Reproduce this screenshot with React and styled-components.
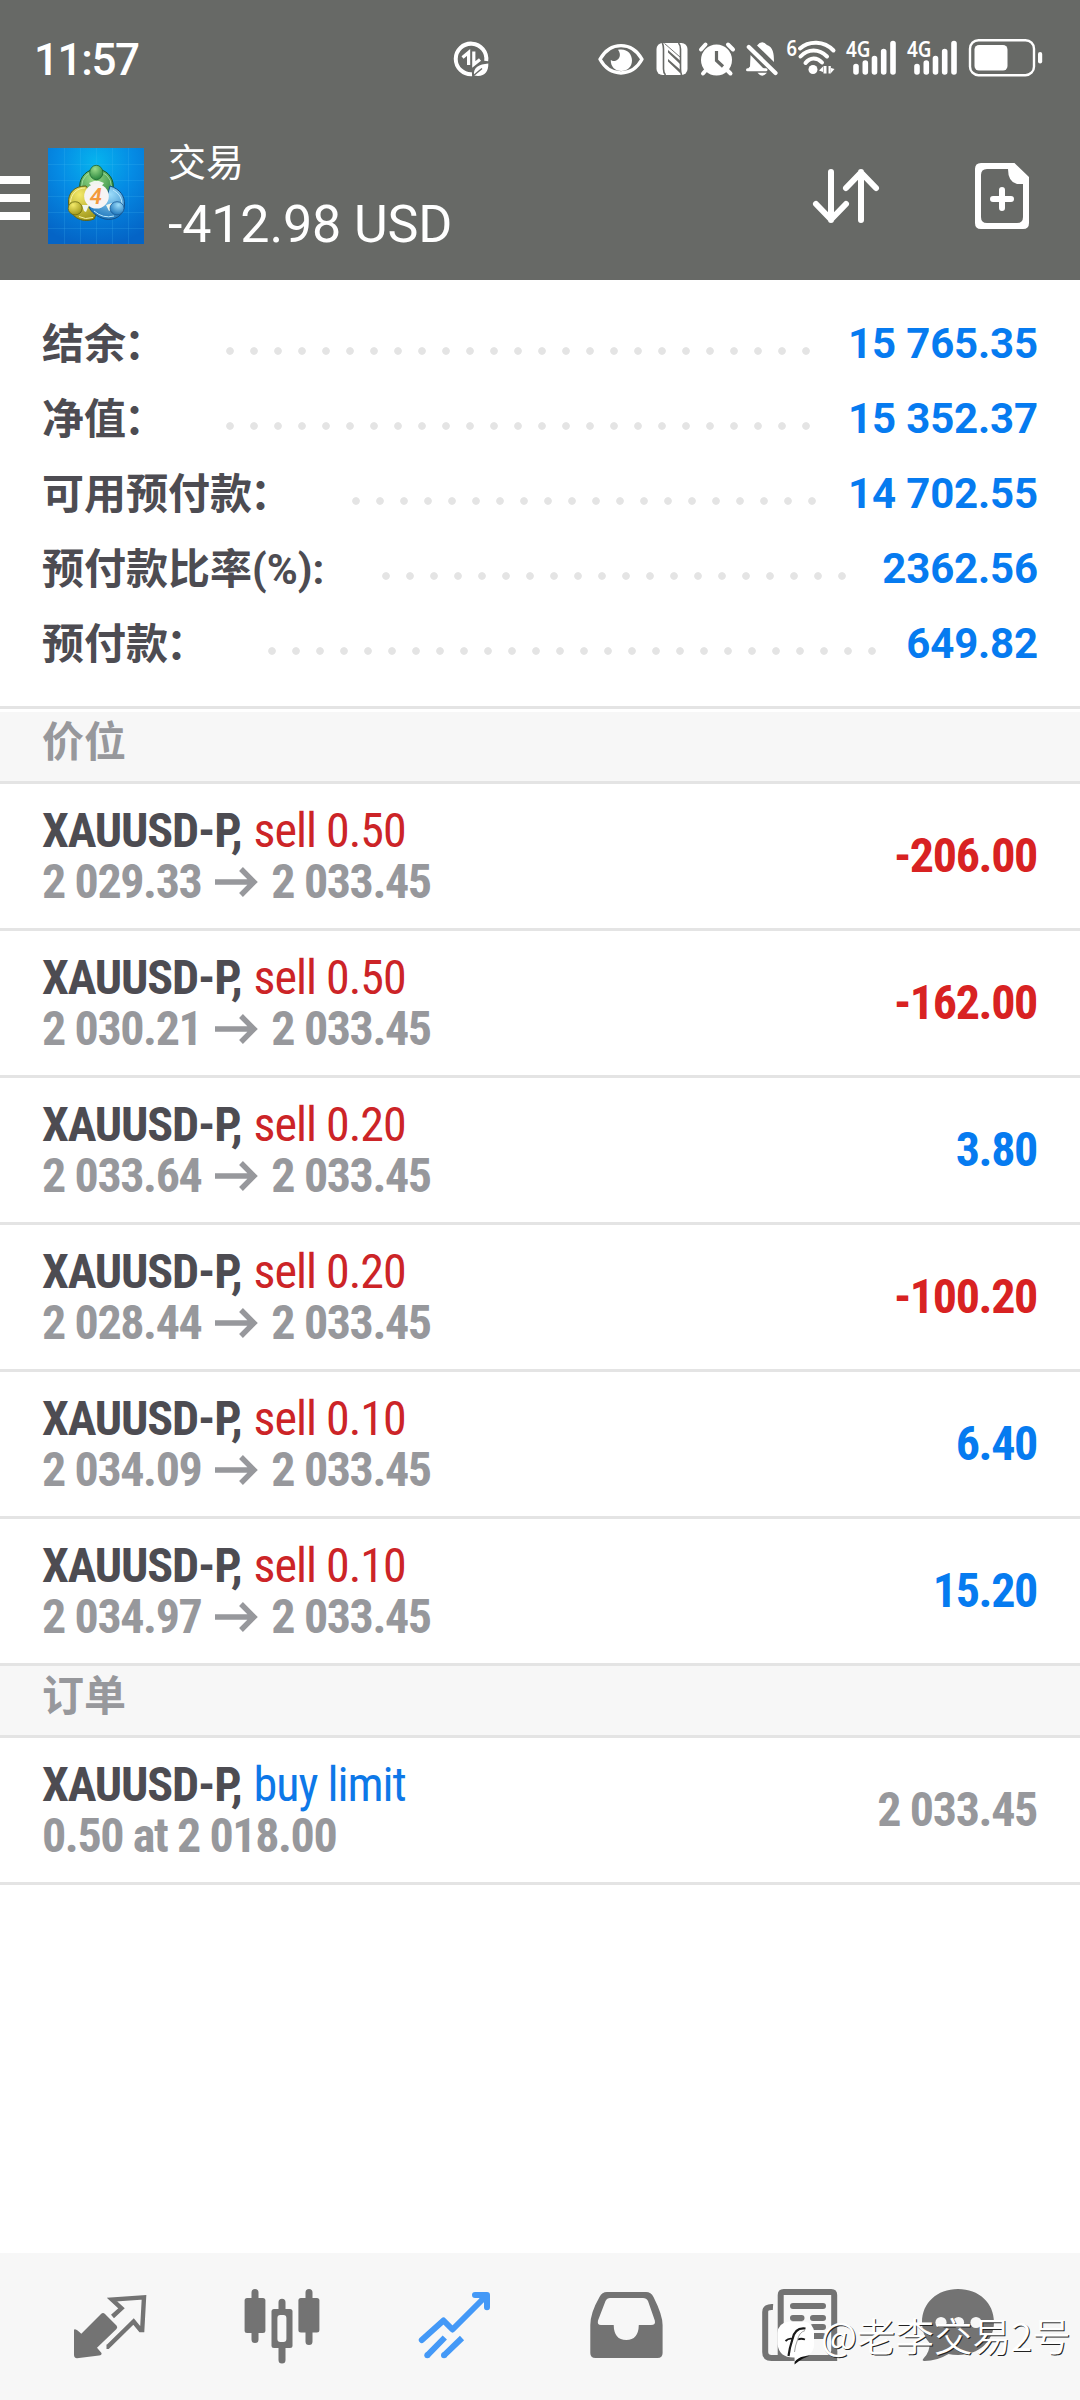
import React from "react";
import styled, { createGlobalStyle } from "styled-components";

const account = [
  { label: "结余", colon: "：", value: "15 765.35" },
  { label: "净值", colon: "：", value: "15 352.37" },
  { label: "可用预付款", colon: "：", value: "14 702.55" },
  { label: "预付款比率(%):", value: "2362.56" },
  { label: "预付款", colon: "：", value: "649.82" },
];

const positions = [
  { symbol: "XAUUSD-P", side: "sell 0.50", open: "2 029.33", current: "2 033.45", profit: "-206.00" },
  { symbol: "XAUUSD-P", side: "sell 0.50", open: "2 030.21", current: "2 033.45", profit: "-162.00" },
  { symbol: "XAUUSD-P", side: "sell 0.20", open: "2 033.64", current: "2 033.45", profit: "3.80" },
  { symbol: "XAUUSD-P", side: "sell 0.20", open: "2 028.44", current: "2 033.45", profit: "-100.20" },
  { symbol: "XAUUSD-P", side: "sell 0.10", open: "2 034.09", current: "2 033.45", profit: "6.40" },
  { symbol: "XAUUSD-P", side: "sell 0.10", open: "2 034.97", current: "2 033.45", profit: "15.20" },
];

const SaverIcon = () => (
  <svg width="36" height="40" viewBox="0 0 36 40" fill="none" stroke="#fff">
    <path d="M19 35.2A15.3 15.3 0 1 1 33.2 22" strokeWidth="4" />
    <path d="M15.6 26V13.5L9.5 18.5M20.8 12.5V25.5L27 20.5" strokeWidth="3.2" />
    <path d="M21 36.5C20 28 26 25.5 35.3 24.5C35.6 33 31 38.5 21 36.5Z" fill="#fff" stroke="none" />
    <path d="M20 37L29 29.5" stroke="#676966" strokeWidth="1.4" />
  </svg>
);

const EyeIcon = () => (
  <svg width="46" height="40" viewBox="0 0 46 40">
    <path d="M2 20.3C12 2 34 2 44 20.3C34 38.5 12 38.5 2 20.3Z" fill="none" stroke="#fff" strokeWidth="3.4" strokeLinejoin="round" />
    <path d="M20 10.8C29 9 34 15 34 21.5C34 28 29 32 23.3 32C17 32 12.5 27.5 12.8 21C13.5 21.5 15 22.3 17 22C22 21 23.5 15 20 10.8Z" fill="#fff" />
  </svg>
);

const NfcIcon = () => (
  <svg width="32" height="40" viewBox="0 0 32 40">
    <rect x="0.5" y="4" width="31" height="32" rx="6" fill="#fff" />
    <path d="M9.5 36Q7.5 34 7.5 30V10Q7.5 7 6.5 4M22.5 4Q24.5 6 24.5 10V30Q24.5 33 25.5 36" fill="none" stroke="#676966" strokeWidth="1.6" />
    <path d="M12 11V13.5L24 25V21.5ZM12 20V22.5L24 34V30.5Z" fill="#676966" />
    <path d="M8.5 4.5L24 18" stroke="#676966" strokeWidth="0.9" />
  </svg>
);

const AlarmIcon = () => (
  <svg width="38" height="40" viewBox="0 0 38 40">
    <circle cx="18.5" cy="21" r="15.5" fill="#fff" />
    <path d="M3 10.5L7.5 5.5M35 10.5L30 5.5M5 34.5L9 30M32.5 34.5L28 30" stroke="#fff" strokeWidth="4" strokeLinecap="round" />
    <path d="M18.5 12V21.5L25 27.5" fill="none" stroke="#676966" strokeWidth="3.2" />
  </svg>
);

const BellOffIcon = () => (
  <svg width="32" height="40" viewBox="0 0 32 40">
    <path d="M4.5 16L20 32H3.5Q1 30 4 27.5Z" fill="#fff" />
    <path d="M11 6.5Q16 0.5 21 6C27 8 28 14 28 23Z" fill="#fff" />
    <path d="M2.8 8L29.5 34" stroke="#fff" strokeWidth="4.2" strokeLinecap="round" />
    <path d="M1.5 30.8H20" stroke="#fff" strokeWidth="3" strokeLinecap="round" />
    <path d="M11.5 33.8H21Q16 39.5 11.5 33.8Z" fill="#fff" />
  </svg>
);

const WifiIcon = () => (
  <svg width="50" height="40" viewBox="0 0 50 40">
    <text x="0.5" y="17" fill="#fff" fontFamily="'Noto Sans', sans-serif" fontWeight="600" fontSize="22" textLength="10.5" lengthAdjust="spacingAndGlyphs">6</text>
    <g fill="none" stroke="#fff" strokeWidth="4" strokeLinecap="round">
      <path d="M14 9.5C23 1.5 38 1.5 47.5 11.5" />
      <path d="M14.5 17.5C22 9.5 33 9.5 41 17.5" />
      <path d="M19.5 24C24 18 31 18 36 23.5" />
    </g>
    <circle cx="27" cy="30.5" r="4.5" fill="#fff" />
    <path d="M37.5 27V34.5H40.5V27ZM37 27.5V33L33 31.5ZM42.5 27H44.8V34.5H42.5ZM45 29L48.5 30L45 34Z" fill="#fff" />
  </svg>
);

const SignalIcon = () => (
  <svg width="51" height="40" viewBox="0 0 51 40">
    <text x="0" y="18" fill="#fff" fontFamily="'Noto Sans', sans-serif" fontWeight="600" fontSize="22" textLength="24.5" lengthAdjust="spacingAndGlyphs">4G</text>
    <path d="M10 27.5V33M19.3 24V33M28.5 19.5V33M37.7 12.5V33M47 4.5V33" stroke="#fff" strokeWidth="5.6" strokeLinecap="round" />
  </svg>
);

const BatteryIcon = () => (
  <svg width="75" height="40" viewBox="0 0 75 40">
    <rect x="2" y="1.2" width="64" height="35" rx="8.5" fill="none" stroke="#fff" strokeWidth="2.4" />
    <rect x="6.5" y="6" width="33" height="25.5" rx="4.5" fill="#fff" />
    <rect x="70" y="13" width="4.2" height="11.5" rx="2.1" fill="#fff" />
  </svg>
);

const MenuIcon = () => (
  <svg width="30" height="48" viewBox="0 0 30 48" fill="#fff">
    <rect y="4" width="30" height="8" />
    <rect y="22" width="30" height="8" />
    <rect y="40" width="30" height="8" />
  </svg>
);

const LogoIcon = () => (
  <svg width="96" height="96" viewBox="0 0 96 96">
    <defs>
      <radialGradient id="sky" cx="48" cy="14" r="84" gradientUnits="userSpaceOnUse">
        <stop offset="0" stopColor="#06b4ee" />
        <stop offset="0.45" stopColor="#058be4" />
        <stop offset="1" stopColor="#0464c6" />
      </radialGradient>
      <radialGradient id="green" cx="0.4" cy="0.25" r="0.8">
        <stop offset="0" stopColor="#9bdc8a" />
        <stop offset="1" stopColor="#23823a" />
      </radialGradient>
      <radialGradient id="gold" cx="0.35" cy="0.25" r="0.8">
        <stop offset="0" stopColor="#f4ea6a" />
        <stop offset="1" stopColor="#9c9416" />
      </radialGradient>
      <radialGradient id="blue" cx="0.6" cy="0.25" r="0.8">
        <stop offset="0" stopColor="#9bdcfa" />
        <stop offset="1" stopColor="#1770b8" />
      </radialGradient>
    </defs>
    <rect width="96" height="96" fill="url(#sky)" />
    <path
      d="M0 16.5H96M0 32.5H96M0 48.5H96M0 64.5H96M0 80.5H96M16.5 0V96M32.5 0V96M48.5 0V96M64.5 0V96M80.5 0V96"
      stroke="#4fc3f5"
      strokeOpacity="0.18"
    />
    <circle cx="48.5" cy="38" r="16.8" fill="url(#green)" stroke="#145a2a" strokeWidth="1" />
    <circle cx="48.5" cy="38" r="14.8" fill="none" stroke="#a4dda0" strokeWidth="0.9" />
    <path d="M38 38C26 38 20 45 20.5 55C21 68 33 76 46 71L52 58Z" fill="url(#gold)" stroke="#5d6218" strokeWidth="1" />
    <path d="M37 40C29 40 23 46 22.5 54M31 68.5Q37 72 45 69.5" fill="none" stroke="#f7f1a0" strokeWidth="1" />
    <path d="M62 38C72 41 77 48 76.5 57C76 68 66 73 57 71C49 69 43 64 41 59L58 52Z" fill="url(#blue)" stroke="#12528c" strokeWidth="1" />
    <path d="M65 42Q74 47 74 56M46 63Q55 71 66 68" fill="none" stroke="#b9e7fc" strokeWidth="1" />
    <path d="M41 35L46 33H51L56 35L52 40H45ZM34 57L41 57L38 64L36 63ZM58 57L64 55L63 62L61 63Z" fill="#eef6ee" />
    <ellipse cx="48.3" cy="24.5" rx="6.6" ry="7.2" fill="url(#green)" stroke="#1a6630" strokeWidth="0.8" />
    <ellipse cx="27.2" cy="60.3" rx="7" ry="6.6" fill="url(#gold)" stroke="#6a6a14" strokeWidth="0.8" />
    <ellipse cx="69" cy="60.3" rx="7" ry="6.6" fill="url(#blue)" stroke="#1a5c98" strokeWidth="0.8" />
    <circle cx="48.5" cy="48.3" r="12.3" fill="#f6f4f4" />
    <text x="47.8" y="56" textAnchor="middle" fill="#f39a3c" fontFamily="Roboto, sans-serif" fontWeight="600" fontSize="22" fontStyle="italic">4</text>
  </svg>
);

const SortIcon = () => (
  <svg width="66" height="56" viewBox="0 0 66 56" fill="none" stroke="#fff" strokeWidth="6" strokeLinecap="round" strokeLinejoin="round">
    <path d="M18 4V52M3 36L18 51.5L33 36" />
    <path d="M48 52V4M33 20L48 4.5L63 20" />
  </svg>
);

const NewOrderIcon = () => (
  <svg width="54" height="66" viewBox="0 0 54 66">
    <path
      d="M6 0H39.5L54 14V60Q54 66 48 66H6Q0 66 0 60V6Q0 0 6 0ZM12 6Q6 6 6 12V54Q6 60 12 60H42Q48 60 48 54V21H42Q33 19 33 6Z"
      fill="#fff"
      fillRule="evenodd"
    />
    <path d="M27 27V45M18 36H36" stroke="#fff" strokeWidth="6" strokeLinecap="round" />
  </svg>
);

const ArrowIcon = () => (
  <svg width="42" height="30" viewBox="0 0 42 30" fill="none" stroke="#97989c" strokeWidth="5.4">
    <path d="M0 15H39M26 2L39 15L26 28" />
  </svg>
);

const QuotesIcon = () => (
  <svg width="90" height="90" viewBox="0 0 90 90" fill="#737373">
    <path d="M9 49Q9.5 46.5 16.3 52.7L36 33Q38 31 40 33L51.5 44.5Q53 46 51.5 48L32 66.7L36.5 72Q37 74 34 74.5L12 77.2Q9 77 9 74Z" />
    <path d="M47.5 35.5L56.5 27.3L47 18.5L79 16.3L77.2 49H75.5L68.6 40.5L42.8 65.8H41.5" fill="none" stroke="#737373" strokeWidth="4.4" />
  </svg>
);

const ChartIcon = () => (
  <svg width="90" height="90" viewBox="0 0 90 90">
    <path d="M18 11.5V58.5M45 21.3V79M72 11.5V60.5" stroke="#737373" strokeWidth="7" strokeLinecap="round" />
    <rect x="7.6" y="17" width="20.8" height="35" rx="2.5" fill="#737373" />
    <rect x="61.4" y="17" width="21" height="34.5" rx="2.5" fill="#737373" />
    <rect x="34.5" y="28" width="21" height="39" rx="2.5" fill="#737373" />
    <rect x="40.4" y="34" width="9" height="27" rx="3" fill="#f7f7f7" />
  </svg>
);

const TradeIcon = () => (
  <svg width="90" height="90" viewBox="0 0 90 90" fill="none" stroke="#4499f7" strokeWidth="6" strokeLinejoin="round">
    <path d="M12.8 59L34.5 39.5L43.5 48.5L77 15M66 14H78V26.3" strokeLinecap="round" />
    <path d="M18.3 74.3L35.8 56.5M35 74.3L53 57" />
    <circle cx="18.3" cy="74.3" r="3" fill="#4499f7" stroke="none" />
    <circle cx="35" cy="74.3" r="3" fill="#4499f7" stroke="none" />
    <path d="M70 17H78V24Z" fill="#4499f7" stroke="none" />
  </svg>
);

const HistoryIcon = () => (
  <svg width="90" height="90" viewBox="0 0 90 90">
    <path
      d="M26 11H65Q70 11 72.5 16Q81.6 34 81.6 44V72Q81.6 77 76.5 77H14.5Q9.3 77 9.3 72V44Q9.3 32 18.5 16Q21 11 26 11ZM29 17Q26 17 24.5 20L17 39.5Q16 44 20 44H32.7Q33 59 45.2 59Q57.5 59 57.8 44H70Q75 44 73.8 39.5L67 20Q65.5 17 62 17Z"
      fill="#737373"
      fillRule="evenodd"
    />
  </svg>
);

const NewsIcon = () => (
  <svg width="90" height="90" viewBox="0 0 90 90" fill="none" stroke="#737373">
    <path d="M25.7 77V14Q25.7 11 28.7 11H76.2Q79.2 11 79.2 14V77Z" strokeWidth="6" />
    <path d="M18 26Q10.2 25.5 10.2 31V71Q10.2 77 16.5 77H79" strokeWidth="6" />
    <path d="M38 25H68M38 37H46.5M58 37H68M38 43.5H46.5M58 46H68M38 55H68" strokeWidth="6" strokeLinecap="round" />
    <path d="M74 80H79Q82.2 80 82.2 76V70H76Z" fill="#737373" stroke="none" />
  </svg>
);

const ChatIcon = () => (
  <svg width="90" height="90" viewBox="0 0 90 90">
    <path
      d="M45 8C66 8 81 22 81 41C81 60 66 74 45 74Q39.5 74 35.5 73Q24 80 11.5 80Q8.5 80 10.5 77.5Q17 71 16.6 62Q9 54 9 41C9 22 24 8 45 8Z"
      fill="#737373"
    />
    <g fill="#f7f7f7">
      <circle cx="28" cy="41.5" r="5.6" />
      <circle cx="45.5" cy="41.5" r="5.6" />
      <circle cx="63" cy="41.5" r="5.6" />
    </g>
  </svg>
);

const BubbleLogo = () => (
  <svg width="38" height="44" viewBox="0 0 38 44">
    <path d="M18 36L17.5 43.5Q23 39 26 37.5L32 35Z" fill="#111" />
    <path d="M12 0.5H27Q37 2 37 12V23Q37 34 26 35.5Q21 36.5 17.5 41V36.5Q2 37 0.5 23V12Q1 2 12 0.5Z" fill="#fff" />
    <path d="M11.5 35Q12.5 27 15.5 18Q18 6 28.5 7.5" fill="none" stroke="#1a1a1a" strokeWidth="2.2" />
    <path d="M8.5 20Q12 16.5 16 18M21 18.5Q24 17 28 18.5" fill="none" stroke="#1a1a1a" strokeWidth="1.8" />
    <path d="M17.5 31Q18 25 20.5 19Q22 11.5 28 9.5" fill="none" stroke="#999" strokeWidth="0.9" />
  </svg>
);

const App = () => {
  return (
    <Screen>
      <GlobalStyle />

      <Header>
        <StatusBar>
          <Clock>11:57</Clock>
          <SaverIcon />
          <StatusIcons>
            <EyeIcon />
            <NfcIcon />
            <AlarmIcon />
            <BellOffIcon />
            <WifiIcon />
            <SignalIcon />
            <SignalIcon />
            <BatteryIcon />
          </StatusIcons>
        </StatusBar>
        <Toolbar>
          <MenuIcon />
          <LogoIcon />
          <TitleBlock>
            <Title>交易</Title>
            <Balance>-412.98 USD</Balance>
          </TitleBlock>
          <Actions>
            <SortIcon />
            <NewOrderIcon />
          </Actions>
        </Toolbar>
      </Header>

      <Summary>
        {account.map((item) => (
          <SummaryRow key={item.label}>
            <SummaryLabel>
              {item.label}
              {item.colon && <Colon>{item.colon}</Colon>}
            </SummaryLabel>
            <Dots />
            <SummaryValue>{item.value}</SummaryValue>
          </SummaryRow>
        ))}
      </Summary>

      <SectionTitle>价位</SectionTitle>
      {positions.map((item) => (
        <Row key={item.open}>
          <Details>
            <Line>
              <Symbol>{item.symbol},</Symbol>
              <Side $color="#cc2427">{item.side}</Side>
            </Line>
            <Prices>
              <span>{item.open}</span>
              <ArrowIcon />
              <span>{item.current}</span>
            </Prices>
          </Details>
          <Amount $color={item.profit.startsWith("-") ? "#d82222" : "#067bf0"}>{item.profit}</Amount>
        </Row>
      ))}

      <SectionTitle>订单</SectionTitle>
      <Row>
        <Details>
          <Line>
            <Symbol>XAUUSD-P,</Symbol>
            <Side $color="#0d78e8">buy limit</Side>
          </Line>
          <Prices>
            <span>0.50 at 2 018.00</span>
          </Prices>
        </Details>
        <Amount $color="#97989c">2 033.45</Amount>
      </Row>

      <BottomNav>
        <QuotesIcon />
        <ChartIcon />
        <TradeIcon />
        <HistoryIcon />
        <NewsIcon />
        <ChatIcon />
        <Watermark>
          <BubbleLogo />
          <span>@老李交易2号</span>
        </Watermark>
      </BottomNav>
    </Screen>
  );
};

export default App;

const GlobalStyle = createGlobalStyle`
  body {
    margin: 0;
    background: #fff;
  }

  svg {
    display: block;
    flex: none;
    overflow: visible;
  }
`;

const Screen = styled.div`
  width: 1080px;
  height: 2400px;
  display: flex;
  flex-direction: column;
  background: #fff;
  overflow: hidden;
  font-family: Roboto, "Noto Sans CJK SC", sans-serif;
  white-space: pre;
`;

const Header = styled.header`
  height: 280px;
  flex: none;
  background: #676966;
  color: #fff;
`;

const StatusBar = styled.div`
  height: 118px;
  padding: 0 37px 0 34px;
  display: flex;
  align-items: center;
`;

const Clock = styled.div`
  width: 419px;
  padding-top: 2px;
  font-size: 44px;
  font-weight: 500;
  line-height: 50px;
  letter-spacing: -1.4px;
`;

const StatusIcons = styled.div`
  margin-left: auto;
  display: flex;
  gap: 10px;

  svg:nth-child(2) {
    margin-left: 2px;
  }

  svg:nth-child(5) {
    margin-left: -2px;
  }
`;

const Toolbar = styled.div`
  height: 156px;
  padding-right: 51px;
  display: flex;
  align-items: center;
  gap: 18px;
`;

const TitleBlock = styled.div`
  margin: 2px 0 0 6px;
`;

const Title = styled.div`
  font-size: 38px;
  font-weight: 400;
  line-height: 55px;
`;

const Balance = styled.div`
  font-size: 52px;
  line-height: 67px;
  letter-spacing: -0.15px;
`;

const Actions = styled.div`
  margin-left: auto;
  display: flex;
  align-items: center;
  gap: 96px;
`;

const Summary = styled.section`
  height: 401px;
  padding: 25px 42px 0;
  flex: none;
  border-bottom: 3px solid #e4e4e4;
  margin-bottom: 3px;
`;

const SummaryRow = styled.div`
  height: 75px;
  display: flex;
  align-items: center;
`;

const SummaryLabel = styled.div`
  padding-bottom: 5px;
  font-size: 42px;
  font-weight: 700;
  color: #4d4c52;
`;

const Colon = styled.span`
  margin: 0 2px 0 -2px;
`;

const Dots = styled.div`
  flex: 1;
  height: 8px;
  margin: 17px 25px 0 58px;
  background: radial-gradient(circle at 4px 4px, #e4e4e4 3.4px, transparent 4.2px) 0 0 / 24px 8px repeat-x;
`;

const SummaryValue = styled.div`
  padding-top: 2px;
  font-size: 42px;
  font-weight: 700;
  letter-spacing: -0.15px;
  color: #067bf0;
`;

const SectionTitle = styled.h2`
  box-sizing: border-box;
  height: 72px;
  margin: 0;
  padding-left: 42px;
  flex: none;
  border-bottom: 3px solid #e4e4e4;
  background: #f7f7f7;
  font-size: 42px;
  font-weight: 700;
  line-height: 61px;
  color: #97989c;
`;

const Row = styled.div`
  box-sizing: border-box;
  height: 147px;
  padding: 0 42px;
  display: flex;
  align-items: center;
  justify-content: space-between;
  flex: none;
  border-bottom: 3px solid #e4e4e4;
  font-family: "Roboto Condensed", Roboto, sans-serif;
  font-stretch: 75%;
  font-size: 48px;
`;

const Details = styled.div`
  display: flex;
  flex-direction: column;
`;

const Line = styled.div`
  display: flex;
  gap: 12px;
  line-height: 51px;
  letter-spacing: -1px;
`;

const Symbol = styled.span`
  font-weight: 700;
  letter-spacing: -1.15px;
  color: #4d4c52;
`;

const Side = styled.span`
  color: ${(props) => props.$color};
`;

const Prices = styled.div`
  display: flex;
  align-items: center;
  gap: 14px;
  line-height: 51px;
  letter-spacing: -1.4px;
  font-weight: 700;
  color: #97989c;
`;

const Amount = styled.div`
  padding: 0 1px 1px 0;
  font-weight: 700;
  letter-spacing: -1.35px;
  color: ${(props) => props.$color};
`;

const BottomNav = styled.nav`
  position: relative;
  box-sizing: border-box;
  height: 147px;
  margin-top: auto;
  padding: 0 0 2px 65px;
  display: flex;
  align-items: center;
  gap: 82px;
  background: #f7f7f7;

  > svg:nth-of-type(5) {
    margin-left: 2px;
  }

  > svg:nth-of-type(6) {
    margin-left: -14px;
  }
`;

const Watermark = styled.div`
  position: absolute;
  left: 777px;
  top: 56px;
  display: flex;
  align-items: flex-start;
  gap: 6px;
  color: #fff;
  font-family: "Noto Sans CJK SC", sans-serif;
  font-size: 38.5px;
  font-weight: 350;
  line-height: 50px;
  text-shadow: 1px 1px 0.5px #222;

  svg {
    margin-top: 12px;
  }
`;
